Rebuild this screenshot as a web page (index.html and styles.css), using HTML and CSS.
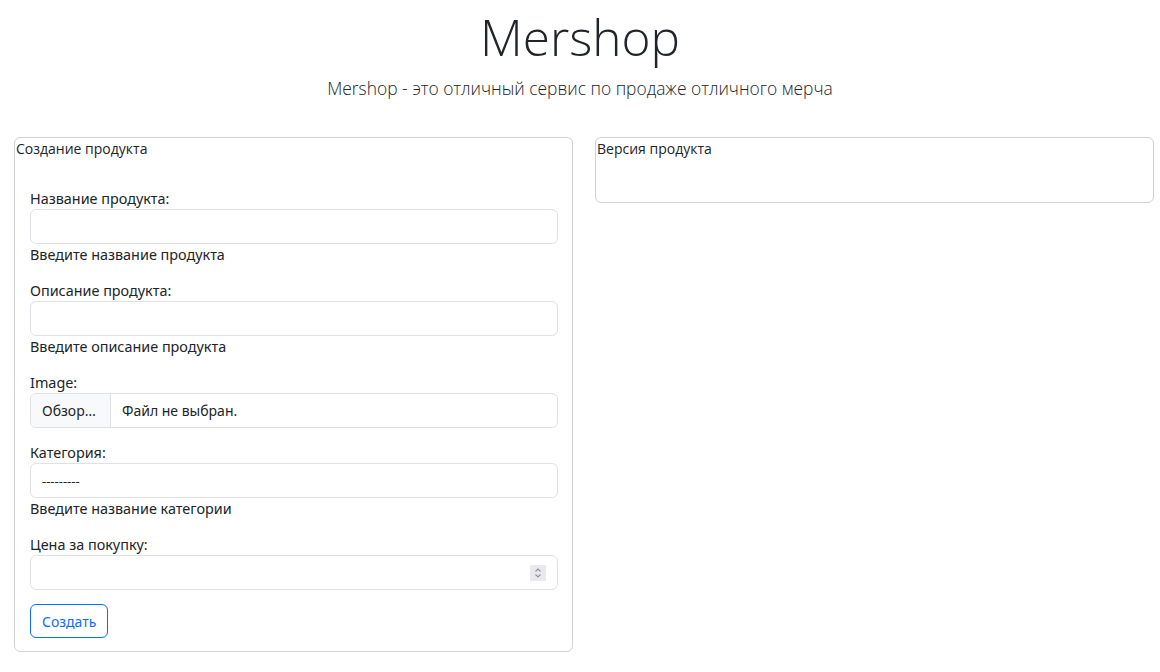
FILE: index.html
```html
<!DOCTYPE html>
<html lang="ru">
<head>
<meta charset="utf-8">
<title>Mershop</title>
<link rel="stylesheet" href="styles.css">
</head>
<body>
<header class="hero">
  <h1 class="hero-title">Mershop</h1>
  <p class="hero-lead">Mershop - это отличный сервис по продаже отличного мерча</p>
</header>
<main class="columns">
  <section class="card">
    <div class="card-title">Создание продукта</div>
    <form class="form">
      <div class="group">
        <label class="label">Название продукта:</label>
        <input class="control" type="text">
        <div class="help">Введите название продукта</div>
      </div>
      <div class="group">
        <label class="label">Описание продукта:</label>
        <input class="control" type="text">
        <div class="help">Введите описание продукта</div>
      </div>
      <div class="group">
        <label class="label">Image:</label>
        <div class="control file">
          <span class="file-btn">Обзор…</span>
          <span class="file-name">Файл не выбран.</span>
        </div>
      </div>
      <div class="group">
        <label class="label">Категория:</label>
        <div class="control select">---------</div>
        <div class="help">Введите название категории</div>
      </div>
      <div class="group">
        <label class="label">Цена за покупку:</label>
        <div class="control number">
          <span class="spin">
            <svg width="16" height="16" viewBox="0 0 16 16"><path d="M5.5 6.5 L8 4 L10.5 6.5" fill="none" stroke="#8f8f9d" stroke-width="1.1"/><path d="M5.5 9.5 L8 12 L10.5 9.5" fill="none" stroke="#8f8f9d" stroke-width="1.1"/></svg>
          </span>
        </div>
      </div>
      <button class="btn" type="button">Создать</button>
    </form>
  </section>
  <section class="card card-small">
    <div class="card-title">Версия продукта</div>
  </section>
</main>
</body>
</html>
```
FILE: styles.css
```css
* { box-sizing: border-box; }
html, body { margin: 0; padding: 0; background: #fff; }
body {
  font-family: "Noto Sans", "Open Sans", sans-serif;
  color: #212529;
  width: 1160px;
}
.hero { text-align: center; padding-top: 4px; }
.hero-title {
  margin: 0;
  font-family: "Open Sans", sans-serif;
  font-weight: 300;
  font-size: 49.5px;
  line-height: 66px;
}
.hero-lead {
  margin: 3px 0 0;
  font-family: "Open Sans", sans-serif;
  font-weight: 300;
  font-size: 17.4px;
  line-height: 30px;
}
.columns {
  display: grid;
  grid-template-columns: 1fr 1fr;
  column-gap: 22px;
  padding: 0 6px 0 14px;
  margin-top: 34px;
  align-items: start;
}
.card {
  border: 1px solid #d2d2d2;
  border-radius: 6px;
}
.card-small { min-height: 66px; }
.card-title {
  font-family: "Open Sans", sans-serif;
  font-size: 14px;
  line-height: 22px;
  padding-left: 1px;
}
.form { padding: 28px 14px 13px 15px; }
.group { margin-bottom: 14px; }
.label {
  display: block;
  font-size: 14.4px;
  line-height: 21px;
}
.control {
  display: block;
  width: 100%;
  height: 35px;
  border: 1px solid #dee2e6;
  border-radius: 6px;
  background: #fff;
  font-family: "Noto Sans", sans-serif;
  font-size: 14px;
  color: #212529;
  padding: 0 11px;
  outline: none;
}
.help {
  font-size: 14.4px;
  line-height: 22px;
}
.file { display: flex; align-items: stretch; padding: 0; overflow: hidden; }
.file-btn {
  display: flex; align-items: center;
  width: 80px;
  padding-left: 11px;
  background: #f8f9fa;
  border-right: 1px solid #dee2e6;
  font-size: 14px;
}
.file-name { display: flex; align-items: center; padding-left: 11px; font-size: 14px; }
.select { display: flex; align-items: center; font-size: 13px; }
.number { display: flex; align-items: center; justify-content: flex-end; padding-right: 11px; }
.spin {
  display: flex;
  width: 16px; height: 16px;
  background: #e9e9ed;
  border-radius: 1px;
}
.btn {
  display: block;
  height: 34px;
  padding: 0 11px;
  border: 1px solid #0d6efd;
  border-radius: 6px;
  background: #fff;
  color: #0d6efd;
  font-family: "Noto Sans", sans-serif;
  font-size: 14px;
}
```
